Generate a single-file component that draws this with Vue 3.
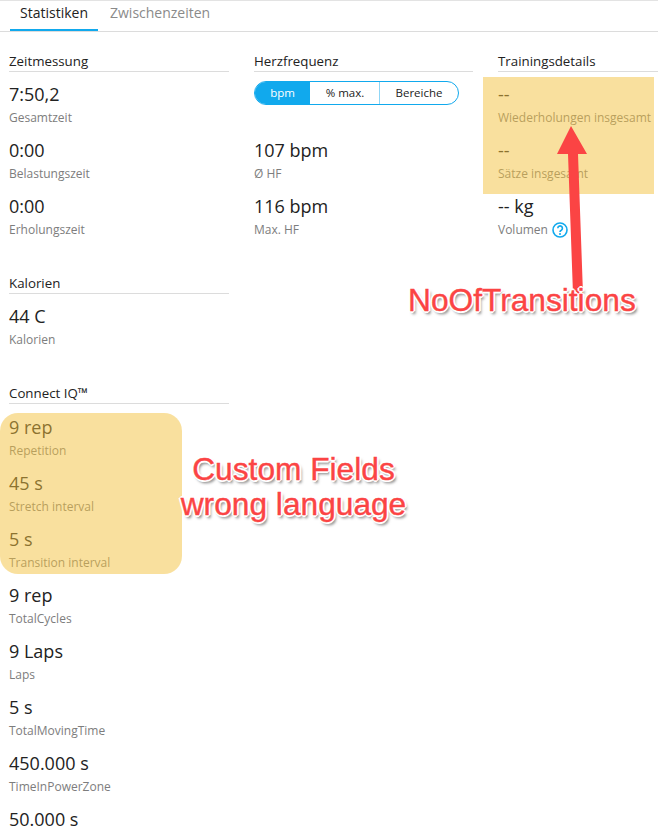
<script setup>
const timing = [
  { value: '7:50,2', label: 'Gesamtzeit' },
  { value: '0:00', label: 'Belastungszeit' },
  { value: '0:00', label: 'Erholungszeit' }
]
const iq = [
  { value: '9 rep', label: 'Repetition' },
  { value: '45 s', label: 'Stretch interval' },
  { value: '5 s', label: 'Transition interval' },
  { value: '9 rep', label: 'TotalCycles' },
  { value: '9 Laps', label: 'Laps' },
  { value: '5 s', label: 'TotalMovingTime' },
  { value: '450.000 s', label: 'TimeInPowerZone' },
  { value: '50.000 s', label: '' }
]
const heart = [
  { value: '107 bpm', label: 'Ø HF' },
  { value: '116 bpm', label: 'Max. HF' }
]
const details = [
  { value: '--', label: 'Wiederholungen insgesamt' },
  { value: '--', label: 'Sätze insgesamt' }
]
</script>

<template>
  <div class="page">
    <div class="tabs">
      <div class="tab active">Statistiken</div>
      <div class="tab">Zwischenzeiten</div>
    </div>

    <div class="columns">
      <div class="col col-a">
        <h3>Zeitmessung</h3>
        <div class="stat" v-for="s in timing" :key="s.label">
          <div class="value">{{ s.value }}</div>
          <div class="label">{{ s.label }}</div>
        </div>

        <h3 class="later">Kalorien</h3>
        <div class="stat">
          <div class="value">44 C</div>
          <div class="label">Kalorien</div>
        </div>

        <h3 class="later iq">Connect IQ™</h3>
        <div class="stat" v-for="s in iq" :key="s.value + s.label">
          <div class="value">{{ s.value }}</div>
          <div class="label" v-if="s.label">{{ s.label }}</div>
        </div>
      </div>

      <div class="col col-b">
        <h3>Herzfrequenz</h3>
        <div class="switch">
          <span class="seg on">bpm</span>
          <span class="seg mid">% max.</span>
          <span class="seg last">Bereiche</span>
        </div>
        <div class="stat" v-for="s in heart" :key="s.label">
          <div class="value">{{ s.value }}</div>
          <div class="label">{{ s.label }}</div>
        </div>
      </div>

      <div class="col col-c">
        <h3>Trainingsdetails</h3>
        <div class="stat" v-for="s in details" :key="s.label">
          <div class="value">{{ s.value }}</div>
          <div class="label nowrap">{{ s.label }}</div>
        </div>
        <div class="stat">
          <div class="value">-- kg</div>
          <div class="label">
            Volumen
            <svg class="help" width="16" height="16" viewBox="0 0 16 16">
              <circle cx="8" cy="8" r="7" fill="none" stroke="#11a9ed" stroke-width="1.6" />
              <path d="M5.8 6.2a2.3 2.3 0 1 1 3.5 2c-.9.5-1.3 1-1.3 1.9" fill="none" stroke="#11a9ed" stroke-width="1.6" />
              <circle cx="8" cy="12" r="1" fill="#11a9ed" />
            </svg>
          </div>
        </div>
      </div>
    </div>

    <div class="mark mark-details"></div>
    <div class="mark mark-iq"></div>

    <svg class="arrow" width="60" height="180" viewBox="0 0 60 180">
      <path d="M28 2 L44 30 L35 30 L40 170 L30 170 L25 30 L14 30 Z" fill="#fb4444" />
    </svg>
    <div class="note note-a">NoOfTransitions</div>
    <div class="note note-b">Custom Fields<br>wrong language</div>
  </div>
</template>

<style scoped>
.page {
  position: relative;
  width: 658px;
  height: 834px;
  overflow: hidden;
  border-top: 1px solid #e3e3e3;
  box-sizing: border-box;
  font-family: "Open Sans", "Liberation Sans", sans-serif;
  color: #222;
}
.tabs {
  display: flex;
  height: 30px;
  padding-left: 10px;
  border-bottom: 1px solid #dcdcdc;
}
.tab {
  padding: 0 10px;
  height: 30px;
  line-height: 24px;
  font-size: 14px;
  color: #8a8a8a;
  box-sizing: border-box;
}
.tab.active {
  color: #222;
  margin-right: 2px;
  border-bottom: 2px solid #11a9ed;
}
.columns {
  display: flex;
  gap: 25px;
  padding: 19px 0 0 9px;
}
.col-a { width: 220px; flex: none; }
.col-b { width: 219px; flex: none; }
.col-c { flex: 1; min-width: 0; }
h3 {
  margin: 0 0 9px;
  font-size: 13.3px;
  font-weight: 400;
  line-height: 20px;
  height: 20px;
  border-bottom: 1px solid #dcdcdc;
}
h3.later { margin-top: 24px; }
h3.iq { margin-bottom: 10px; }
.stat { height: 56px; box-sizing: border-box; }
.value {
  font-size: 18px;
  line-height: 26px;
  height: 29px;
}
.label {
  font-size: 12px;
  line-height: 16px;
  color: #7d7d7d;
  display: flex;
  align-items: center;
  gap: 4px;
}
.nowrap { white-space: nowrap; }
.help { flex: none; }
.switch {
  display: flex;
  height: 24px;
  width: 205px;
  margin-top: 3px;
  margin-bottom: 32px;
  border: 1px solid #11a9ed;
  border-radius: 12px;
  box-sizing: border-box;
  overflow: hidden;
  font-size: 11.5px;
  line-height: 22px;
  text-align: center;
}
.seg { display: block; }
.seg.on { width: 55px; background: #11a9ed; color: #fff; }
.seg.mid { width: 70px; border-left: 1px solid #fff; border-right: 1px solid #8fd6f6; box-sizing: border-box; }
.seg.last { flex: 1; }
.mark {
  position: absolute;
  background: rgba(243, 193, 61, 0.5);
}
.mark-details {
  left: 483px;
  top: 76px;
  width: 171px;
  height: 117px;
}
.mark-iq {
  left: 0;
  top: 412px;
  width: 182px;
  height: 161px;
  border-radius: 18px;
}
.arrow {
  position: absolute;
  left: 543px;
  top: 123px;
}
.note {
  position: absolute;
  font-family: "Liberation Sans", Arial, sans-serif;
  font-size: 31.7px;
  line-height: 35px;
  color: #fb4444;
  text-align: center;
  white-space: nowrap;
  -webkit-text-stroke: 0.4px #fb4444;
  text-shadow:
    -1px -1px 0 #fff, 1px -1px 0 #fff, -1px 1px 0 #fff, 1px 1px 0 #fff,
    0 -2px 0 #fff, 0 2px 0 #fff, -2px 0 0 #fff, 2px 0 0 #fff,
    2px 3px 3px rgba(0, 0, 0, 0.55);
}
.note-a { left: 408px; top: 282px; }
.note-b { left: 180px; top: 451px; width: 227px; }
</style>
